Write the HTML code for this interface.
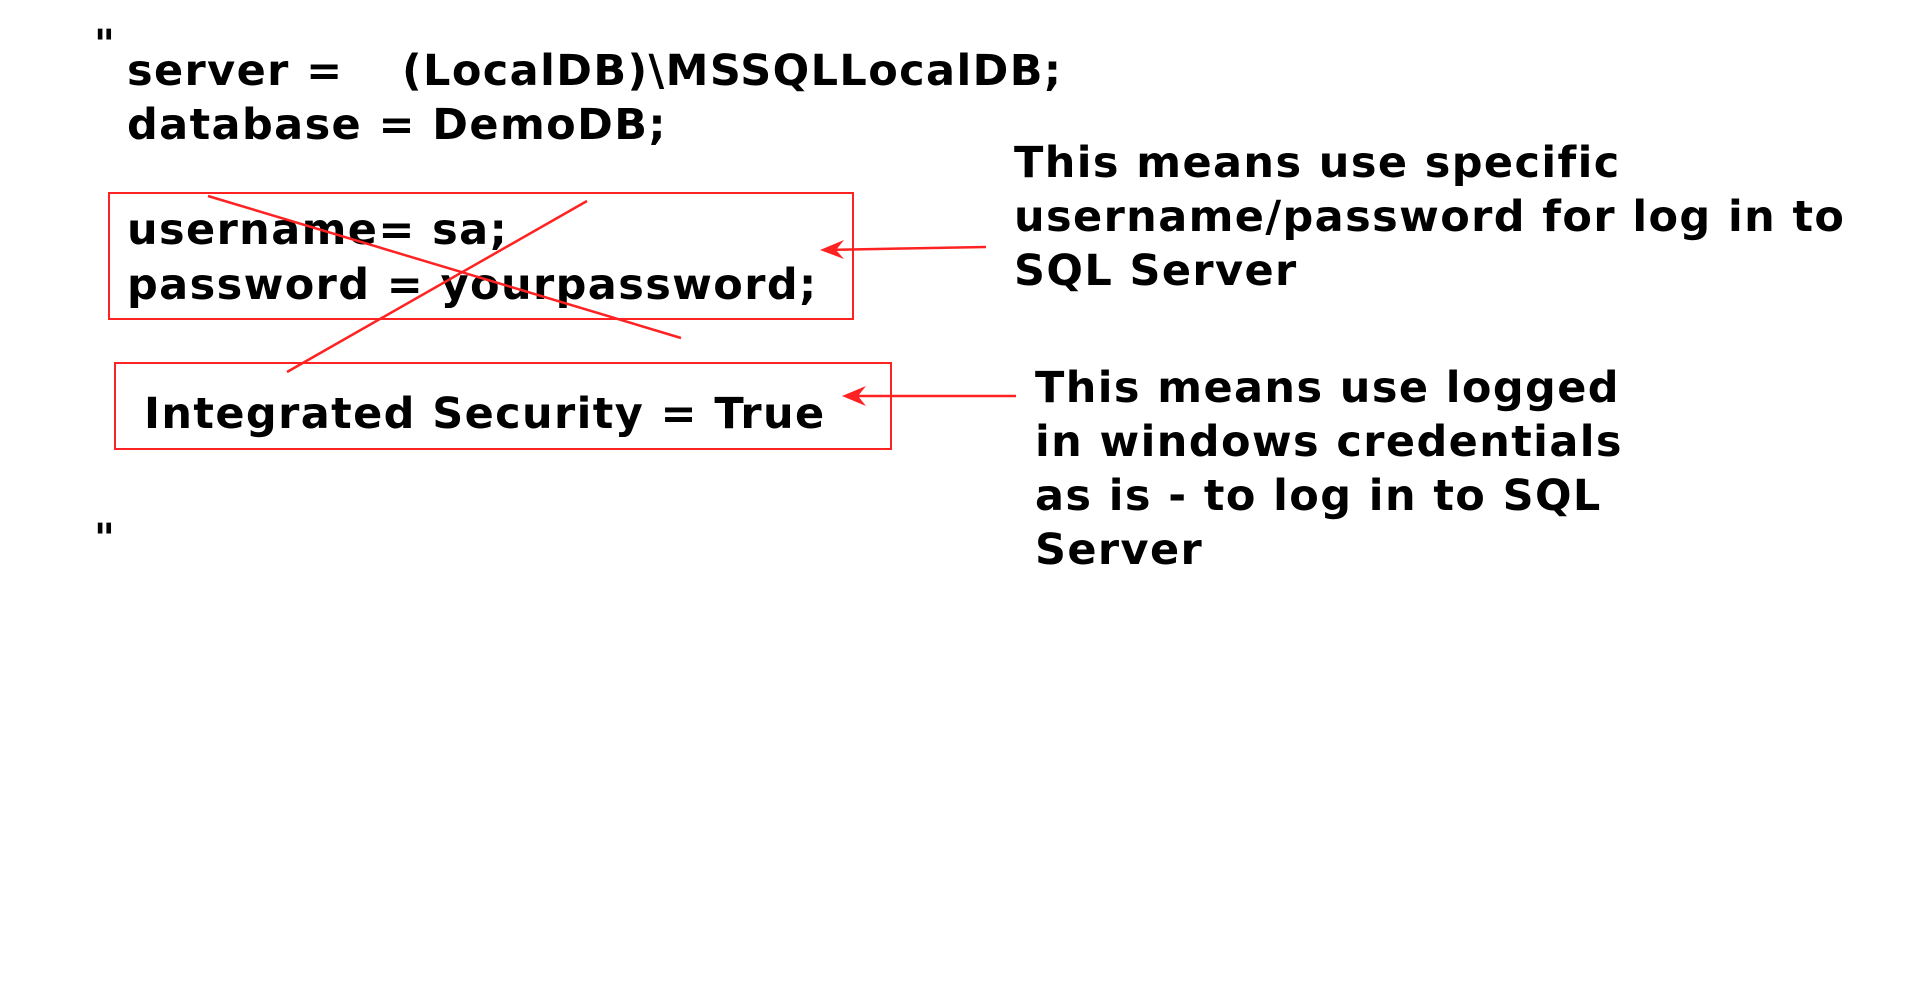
<!DOCTYPE html>
<html><head><meta charset="utf-8"><style>
html,body{margin:0;padding:0;background:#fff;width:1920px;height:991px;overflow:hidden;position:relative}
.t{position:absolute;font-family:"DejaVu Sans","Liberation Sans",sans-serif;font-weight:bold;font-size:43px;color:#000;white-space:nowrap;line-height:54px;letter-spacing:1.4px}
.box{position:absolute;border:2px solid #f22}
</style></head><body>
<div class="t" style="left:94px;top:18px;font-size:40px">"</div>
<div class="t" style="left:127px;top:44px">server =</div>
<div class="t" style="left:402px;top:44px">(LocalDB)\MSSQLLocalDB;</div>
<div class="t" style="left:127px;top:98px">database = DemoDB;</div>
<div class="box" style="left:108px;top:192px;width:742px;height:124px"></div>
<div class="t" style="left:127px;top:203px">username= sa;</div>
<div class="t" style="left:127px;top:258px">password = yourpassword;</div>
<div class="box" style="left:114px;top:362px;width:774px;height:84px"></div>
<div class="t" style="left:144px;top:387px">Integrated Security = True</div>
<div class="t" style="left:94px;top:512px;font-size:40px">"</div>
<div class="t" style="left:1014px;top:136px">This means use specific<br>username/password for log in to<br>SQL Server</div>
<div class="t" style="left:1035px;top:361px">This means use logged<br>in windows credentials<br>as is - to log in to SQL<br>Server</div>
<svg style="position:absolute;left:0;top:0" width="1920" height="991">
<g stroke="#f22" stroke-width="2.5" fill="none">
<line x1="208" y1="196" x2="681" y2="338"/>
<line x1="587" y1="201" x2="287" y2="372"/>
<line x1="986" y1="247" x2="824" y2="250"/>
<line x1="1016" y1="396" x2="846" y2="396"/>
</g>
<g fill="#f22">
<path d="M820 250 L844 240 L836 250 L844 259 Z"/>
<path d="M842 396 L866 386 L858 396 L866 406 Z"/>
</g>
</svg>
</body></html>
